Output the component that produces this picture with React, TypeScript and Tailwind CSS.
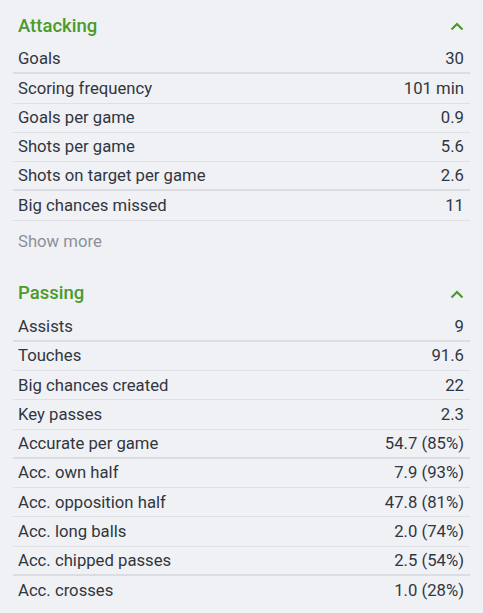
import React from 'react';

type Row = { label: string; value: string; thick?: boolean };

const attacking: Row[] = [
    { label: 'Goals', value: '30', thick: true },
    { label: 'Scoring frequency', value: '101 min' },
    { label: 'Goals per game', value: '0.9' },
    { label: 'Shots per game', value: '5.6' },
    { label: 'Shots on target per game', value: '2.6', thick: true },
    { label: 'Big chances missed', value: '11' },
];

const passing: Row[] = [
    { label: 'Assists', value: '9', thick: true },
    { label: 'Touches', value: '91.6' },
    { label: 'Big chances created', value: '22' },
    { label: 'Key passes', value: '2.3' },
    { label: 'Accurate per game', value: '54.7 (85%)', thick: true },
    { label: 'Acc. own half', value: '7.9 (93%)' },
    { label: 'Acc. opposition half', value: '47.8 (81%)' },
    { label: 'Acc. long balls', value: '2.0 (74%)' },
    { label: 'Acc. chipped passes', value: '2.5 (54%)', thick: true },
    { label: 'Acc. crosses', value: '1.0 (28%)' },
];

function Chevron() {
    return (
        <svg width="14" height="9" viewBox="0 0 14 9" className="mr-[6px]">
            <path d="M1.5 7.5 L7 2 L12.5 7.5" stroke="#4a9a2c" strokeWidth="2.2" fill="none" />
        </svg>
    );
}

function Section({ title, rows, last }: { title: string; rows: Row[]; last?: boolean }) {
    return (
        <section>
            <div className="flex items-center justify-between h-[45px] pl-[5px] pt-[8px]">
                <h3 className="text-[18.5px] font-medium text-[#4a9a2c]">{title}</h3>
                <Chevron />
            </div>
            {rows.map((r, i) => (
                <div
                    key={r.label}
                    className={
                        'flex items-center justify-between pl-[5px] pr-[6px] text-[16.7px] text-[#30363f] h-[29.25px] ' +
                        (i === rows.length - 1 && last
                            ? ''
                            : r.thick
                              ? 'border-b-2 border-[#dcdde2]'
                              : 'border-b border-[#dfe0e5]')
                    }
                >
                    <span>{r.label}</span>
                    <span>{r.value}</span>
                </div>
            ))}
        </section>
    );
}

export default function App() {
    return (
        <div className="w-[483px] h-[613px] bg-[#f0f1f5] px-[13px] overflow-hidden" style={{ fontFamily: 'Roboto, "Noto Sans", sans-serif' }}>
            <Section title="Attacking" rows={attacking} />
            <div className="h-[43px] pl-[5px] flex items-center text-[16.7px] text-[#8c9099]">Show more</div>
            <div className="h-[4px]" />
            <Section title="Passing" rows={passing} last />
        </div>
    );
}
